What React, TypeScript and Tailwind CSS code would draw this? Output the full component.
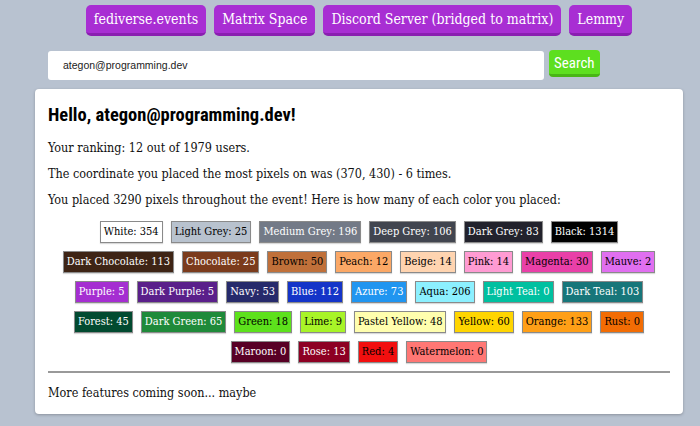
import React from "react";

type Chip = { name: string; n: number; bg: string; dark: boolean };

const rows: Chip[][] = [
  [
    { name: "White", n: 354, bg: "#ffffff", dark: false },
    { name: "Light Grey", n: 25, bg: "#b8c2ce", dark: false },
    { name: "Medium Grey", n: 196, bg: "#737a87", dark: true },
    { name: "Deep Grey", n: 106, bg: "#41454f", dark: true },
    { name: "Dark Grey", n: 83, bg: "#22222c", dark: true },
    { name: "Black", n: 1314, bg: "#000000", dark: true },
  ],
  [
    { name: "Dark Chocolate", n: 113, bg: "#3e2415", dark: true },
    { name: "Chocolate", n: 25, bg: "#7b3b1c", dark: true },
    { name: "Brown", n: 50, bg: "#c0703a", dark: false },
    { name: "Peach", n: 12, bg: "#fba866", dark: false },
    { name: "Beige", n: 14, bg: "#ffd4b0", dark: false },
    { name: "Pink", n: 14, bg: "#ff9bd3", dark: false },
    { name: "Magenta", n: 30, bg: "#e940a8", dark: false },
    { name: "Mauve", n: 2, bg: "#e06ff0", dark: false },
  ],
  [
    { name: "Purple", n: 5, bg: "#a52ed1", dark: true },
    { name: "Dark Purple", n: 5, bg: "#5a1f8a", dark: true },
    { name: "Navy", n: 53, bg: "#262a6b", dark: true },
    { name: "Blue", n: 112, bg: "#1434c8", dark: true },
    { name: "Azure", n: 73, bg: "#2095f0", dark: true },
    { name: "Aqua", n: 206, bg: "#8cf0ff", dark: false },
    { name: "Light Teal", n: 0, bg: "#00c0a0", dark: true },
    { name: "Dark Teal", n: 103, bg: "#17767a", dark: true },
  ],
  [
    { name: "Forest", n: 45, bg: "#024a30", dark: true },
    { name: "Dark Green", n: 65, bg: "#1f8a3a", dark: true },
    { name: "Green", n: 18, bg: "#5de11c", dark: false },
    { name: "Lime", n: 9, bg: "#a8f428", dark: false },
    { name: "Pastel Yellow", n: 48, bg: "#fffeae", dark: false },
    { name: "Yellow", n: 60, bg: "#ffd500", dark: false },
    { name: "Orange", n: 133, bg: "#ff9f17", dark: false },
    { name: "Rust", n: 0, bg: "#f26c04", dark: false },
  ],
  [
    { name: "Maroon", n: 0, bg: "#580025", dark: true },
    { name: "Rose", n: 13, bg: "#8d0023", dark: true },
    { name: "Red", n: 4, bg: "#f20f0f", dark: false },
    { name: "Watermelon", n: 0, bg: "#ff7774", dark: false },
  ],
];

const serif = "font-['DejaVu_Serif',serif] font-stretch-condensed";

export default function App() {
  return (
    <div className={`min-h-[426px] w-full bg-[#b8c2d0] ${serif}`}>
      <div className="flex justify-center gap-2 pl-[18px] pt-[5px]">
        {["fediverse.events", "Matrix Space", "Discord Server (bridged to matrix)", "Lemmy"].map((t) => (
          <a
            key={t}
            className="h-[31px] whitespace-nowrap rounded-[5px] border-b-[3px] border-[#8a1fb0] bg-[#a82ed3] px-2 pt-[3px] text-[14px] leading-[22px] text-white"
          >
            {t}
          </a>
        ))}
      </div>
      <div className="ml-[48px] mt-[15px] flex items-start gap-[5px]">
        <div className="flex h-[29px] w-[496px] items-center rounded-[3px] bg-white pl-[15px] font-['Liberation_Sans',sans-serif] text-[10.5px] text-[#222]">
          ategon@programming.dev
        </div>
        <div className="-mt-px flex h-[27px] items-center rounded-[4px] border-b-[3px] border-[#48b515] bg-[#5ddf1f] px-[5px] pt-[3px] font-['Roboto',sans-serif] text-[15px] text-white">
          Search
        </div>
      </div>
      <div className="mx-[35px] mt-[9px] w-[648px] rounded-[4px] bg-white px-[13px] pb-[14px] pt-[16px] shadow-[0_1px_3px_rgba(0,0,0,0.25)]">
        <h1 className="font-['Roboto',sans-serif] text-[18.5px] font-bold leading-[20px] text-black">
          Hello, ategon@programming.dev!
        </h1>
        <p className="mt-[16px] text-[12.5px] leading-[14px] text-[#111]">Your ranking: 12 out of 1979 users.</p>
        <p className="mt-[12px] text-[12.5px] leading-[14px] text-[#111]">
          The coordinate you placed the most pixels on was (370, 430) - 6 times.
        </p>
        <p className="mt-[12px] text-[12.5px] leading-[14px] text-[#111]">
          You placed 3290 pixels throughout the event! Here is how many of each color you placed:
        </p>
        <div className="mt-[14px] flex flex-col items-center gap-[8px]">
          {rows.map((r, i) => (
            <div key={i} className="flex justify-center gap-[8px]">
              {r.map((c) => (
                <span
                  key={c.name}
                  className={`flex h-[22px] shrink-0 items-center whitespace-nowrap border border-[#8a8a8a] px-[3px] text-[11px] shadow-[0_1px_1px_rgba(0,0,0,0.15)] ${c.dark ? "text-white" : "text-black"}`}
                  style={{ backgroundColor: c.bg }}
                >
                  {c.name}: {c.n}
                </span>
              ))}
            </div>
          ))}
        </div>
        <hr className="mt-[8px] border-t-2 border-[#999]" />
        <p className="mt-[13px] text-[12.5px] leading-[14px] text-[#111]">More features coming soon... maybe</p>
      </div>
    </div>
  );
}
